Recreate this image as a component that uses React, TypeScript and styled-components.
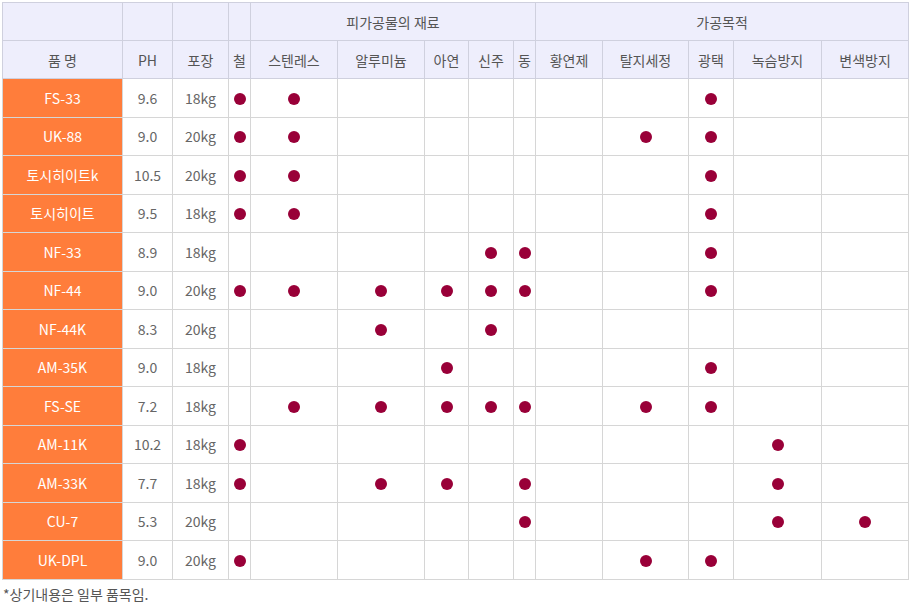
import React from 'react';
import styled, { createGlobalStyle } from 'styled-components';

const GlobalStyle = createGlobalStyle`
    body {
        margin: 0;
        background: #ffffff;
        font-family: "Noto Sans CJK KR", "Noto Sans", sans-serif;
    }
`;

const Page = styled.div`
    padding: 2px 3px 0 2px;
    width: 906px;
`;

const Table = styled.table`
    width: 906px;
    table-layout: fixed;
    border-collapse: collapse;
    font-size: 14px;
    color: #666;
`;

const HeadCell = styled.th`
    height: 37px;
    padding: 0;
    background: #eeeefc;
    border: 1px solid #cfd0de;
    color: #555;
    font-weight: 400;
    text-align: center;
    white-space: nowrap;
`;

const NameCell = styled.td`
    height: 37.5px;
    padding: 0;
    background: #ff7d3b;
    border: 1px solid #d6d6d6;
    color: #fff;
    text-align: center;
    white-space: nowrap;
`;

const Cell = styled.td`
    height: 37.5px;
    padding: 0;
    border: 1px solid #d6d6d6;
    text-align: center;
    white-space: nowrap;
`;

const Dot = styled.span`
    display: inline-block;
    width: 12px;
    height: 12px;
    border-radius: 50%;
    background: #990038;
    vertical-align: middle;
    margin-top: -2px;
`;

const Note = styled.p`
    margin: 4px 0 0 1px;
    font-size: 14px;
    color: #555;
`;

const widths = [120, 50, 56, 22, 87, 87, 44, 45, 22, 67, 86, 45, 88, 87];

const materials = ['철', '스텐레스', '알루미늄', '아연', '신주', '동'];
const purposes = ['황연제', '탈지세정', '광택', '녹슴방지', '변색방지'];
const marks = [...materials, ...purposes];

type Product = { name: string; ph: string; pack: string; on: string[] };

const products: Product[] = [
    { name: 'FS-33', ph: '9.6', pack: '18kg', on: ['철', '스텐레스', '광택'] },
    { name: 'UK-88', ph: '9.0', pack: '20kg', on: ['철', '스텐레스', '탈지세정', '광택'] },
    { name: '토시히이트k', ph: '10.5', pack: '20kg', on: ['철', '스텐레스', '광택'] },
    { name: '토시히이트', ph: '9.5', pack: '18kg', on: ['철', '스텐레스', '광택'] },
    { name: 'NF-33', ph: '8.9', pack: '18kg', on: ['신주', '동', '광택'] },
    { name: 'NF-44', ph: '9.0', pack: '20kg', on: ['철', '스텐레스', '알루미늄', '아연', '신주', '동', '광택'] },
    { name: 'NF-44K', ph: '8.3', pack: '20kg', on: ['알루미늄', '신주'] },
    { name: 'AM-35K', ph: '9.0', pack: '18kg', on: ['아연', '광택'] },
    { name: 'FS-SE', ph: '7.2', pack: '18kg', on: ['스텐레스', '알루미늄', '아연', '신주', '동', '탈지세정', '광택'] },
    { name: 'AM-11K', ph: '10.2', pack: '18kg', on: ['철', '녹슴방지'] },
    { name: 'AM-33K', ph: '7.7', pack: '18kg', on: ['철', '알루미늄', '아연', '동', '녹슴방지'] },
    { name: 'CU-7', ph: '5.3', pack: '20kg', on: ['동', '녹슴방지', '변색방지'] },
    { name: 'UK-DPL', ph: '9.0', pack: '20kg', on: ['철', '탈지세정', '광택'] },
];

export default function App() {
    return (
        <Page>
            <GlobalStyle />
            <Table>
                <colgroup>
                    {widths.map((w, i) => <col key={i} style={{ width: w }} />)}
                </colgroup>
                <thead>
                    <tr>
                        <HeadCell />
                        <HeadCell />
                        <HeadCell />
                        <HeadCell />
                        <HeadCell colSpan={5}>피가공물의 재료</HeadCell>
                        <HeadCell colSpan={5}>가공목적</HeadCell>
                    </tr>
                    <tr>
                        <HeadCell>품 명</HeadCell>
                        <HeadCell>PH</HeadCell>
                        <HeadCell>포장</HeadCell>
                        {marks.map(m => <HeadCell key={m}>{m}</HeadCell>)}
                    </tr>
                </thead>
                <tbody>
                    {products.map(p => (
                        <tr key={p.name}>
                            <NameCell>{p.name}</NameCell>
                            <Cell>{p.ph}</Cell>
                            <Cell>{p.pack}</Cell>
                            {marks.map(m => (
                                <Cell key={m}>{p.on.includes(m) ? <Dot /> : null}</Cell>
                            ))}
                        </tr>
                    ))}
                </tbody>
            </Table>
            <Note>*상기내용은 일부 품목임.</Note>
        </Page>
    );
}
